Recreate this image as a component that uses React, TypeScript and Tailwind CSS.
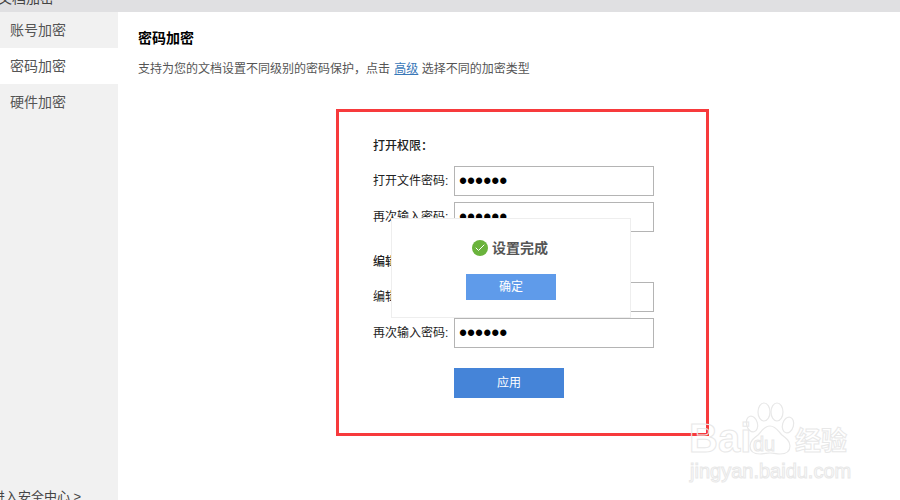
import { Check } from 'lucide-react';

const font = { cjk: 'font-["Liberation_Sans","Noto_Sans_CJK_SC",sans-serif]' };

function PasswordRow({ label }: { label: string }) {
  return (
    <div className="flex items-center h-[30px]">
      <label className="w-[81px] text-[12px] text-[#222] whitespace-nowrap">{label}</label>
      <input
        type="password"
        readOnly
        value="123456"
        className="w-[200px] h-[30px] border border-[#b4b4b4] bg-white px-[4px] pt-[1px] text-[23px] text-black outline-none"
      />
    </div>
  );
}

function Watermark() {
  const outline = 'text-transparent [-webkit-text-stroke:1px_#e8e8e8]';
  return (
    <div className="absolute left-[689px] top-[402px] w-[170px] h-[80px] pointer-events-none">
      <div className={`absolute left-0 top-[14px] text-[40px] leading-[44px] font-bold ${outline}`}>Bai</div>
      <svg className="absolute left-[56px] top-0" width="50" height="54" viewBox="0 0 50 54" fill="none" stroke="#e8e8e8" strokeWidth="1.2">
        <ellipse cx="7" cy="22" rx="5.5" ry="8" transform="rotate(-15 7 22)" />
        <ellipse cx="19" cy="10" rx="6" ry="9" />
        <ellipse cx="32" cy="10" rx="6" ry="9" />
        <ellipse cx="43" cy="23" rx="5.5" ry="8" transform="rotate(15 43 23)" />
        <path d="M25 24c-6 0-8 5-12 9-4 3-8 6-8 11 0 6 5 8 10 8 4 0 7-1 10-1s6 1 10 1c5 0 10-2 10-8 0-5-4-8-8-11-4-4-6-9-12-9z" />
      </svg>
      <div className={`absolute left-[64px] top-[31px] text-[20px] leading-[22px] ${outline}`}>du</div>
      <div className={`absolute left-[106px] top-[24px] text-[26px] leading-[30px] font-bold ${outline}`}>经验</div>
      <div className={`absolute left-[1px] top-[56px] text-[20px] leading-[26px] whitespace-nowrap ${outline}`}>jingyan.baidu.com</div>
    </div>
  );
}

export default function App() {
  return (
    <div className={`relative w-[900px] h-[500px] overflow-hidden bg-white flex flex-col ${font.cjk}`}>
      {/* Title bar, cut off by the screenshot */}
      <div className="h-[12px] shrink-0 bg-[#e0e0e2] overflow-hidden flex justify-between">
        <span className="-ml-[2px] -mt-[11px] text-[14px] leading-[18px] text-[#444]">文档加密</span>
        <span className="text-[#777] text-[14px] leading-none -mt-[11px] mr-[3px]">×</span>
      </div>

      <div className="flex flex-1 min-h-0">
        <aside className="w-[118px] shrink-0 bg-[#f1f1f1] flex flex-col text-[14px] text-[#555] overflow-hidden">
          <div className="h-[36px] pl-[10px] flex items-center">账号加密</div>
          <div className="h-[36px] pl-[10px] flex items-center bg-white">密码加密</div>
          <div className="h-[36px] pl-[10px] flex items-center">硬件加密</div>
          <div className="mt-auto -mb-[7px] -ml-[8px] h-[20px] text-[13px] leading-[20px] text-[#444] whitespace-nowrap">
            进入安全中心 &gt;
          </div>
        </aside>

        <main className="flex-1 pl-[20px] pt-[17px]">
          <h1 className="text-[14px] leading-[18px] font-bold text-black">密码加密</h1>
          <p className="mt-[13px] text-[12px] leading-[18px] text-[#555] whitespace-nowrap">
            支持为您的文档设置不同级别的密码保护，点击 <a className="ml-[1px] text-[#3a78b8] underline">高级</a> 选择不同的加密类型
          </p>

          {/* Red annotation frame */}
          <div className="relative mt-[31px] ml-[198px] w-[373px] h-[327px] border-[3px] border-[#f73a3c] pl-[34px] pt-[26px]">
            <div className="text-[12px] leading-[16px] font-medium text-[#222]">打开权限：</div>
            <div className="mt-[12px] flex flex-col gap-[6px]">
              <PasswordRow label="打开文件密码:" />
              <PasswordRow label="再次输入密码:" />
            </div>
            <div className="mt-[22px] text-[12px] leading-[16px] font-medium text-[#222]">编辑权限：</div>
            <div className="mt-[12px] flex flex-col gap-[6px]">
              <PasswordRow label="编辑文件密码:" />
              <PasswordRow label="再次输入密码:" />
            </div>
            <button className="mt-[20px] ml-[81px] block w-[110px] h-[30px] bg-[#4584d8] text-[12px] text-white">应用</button>

            {/* Dialog lying over the form */}
            <div className="absolute left-[52px] top-[106px] w-[240px] h-[100px] bg-white border border-[#eeeeee] flex flex-col items-center">
              <div className="mt-[20px] mr-[2px] h-[18px] flex items-center gap-[4px]">
                <span className="w-[16px] h-[16px] rounded-full bg-[#6ab33c] flex items-center justify-center">
                  <Check size={12} color="#fff" strokeWidth={2} />
                </span>
                <span className="text-[14px] font-bold text-[#555]">设置完成</span>
              </div>
              <button className="mt-[17px] w-[90px] h-[26px] bg-[#5f9bea] text-[12px] text-white">确定</button>
            </div>
          </div>
        </main>
      </div>

      <Watermark />
    </div>
  );
}
